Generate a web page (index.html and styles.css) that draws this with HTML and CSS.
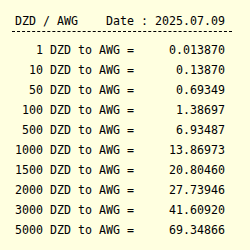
FILE: index.html
```html
<!DOCTYPE html>
<html>
<head>
<meta charset="utf-8">
<link rel="stylesheet" href="styles.css">
</head>
<body>
<div class="box">
  <div class="head">
    <span>DZD / AWG</span>
    <span>Date : 2025.07.09</span>
  </div>
  <div class="rows">
    <div class="row"><span class="amt">1</span><span class="mid">DZD to AWG =</span><span class="val">0.013870</span></div>
    <div class="row"><span class="amt">10</span><span class="mid">DZD to AWG =</span><span class="val">0.13870</span></div>
    <div class="row"><span class="amt">50</span><span class="mid">DZD to AWG =</span><span class="val">0.69349</span></div>
    <div class="row"><span class="amt">100</span><span class="mid">DZD to AWG =</span><span class="val">1.38697</span></div>
    <div class="row"><span class="amt">500</span><span class="mid">DZD to AWG =</span><span class="val">6.93487</span></div>
    <div class="row"><span class="amt">1000</span><span class="mid">DZD to AWG =</span><span class="val">13.86973</span></div>
    <div class="row"><span class="amt">1500</span><span class="mid">DZD to AWG =</span><span class="val">20.80460</span></div>
    <div class="row"><span class="amt">2000</span><span class="mid">DZD to AWG =</span><span class="val">27.73946</span></div>
    <div class="row"><span class="amt">3000</span><span class="mid">DZD to AWG =</span><span class="val">41.60920</span></div>
    <div class="row"><span class="amt">5000</span><span class="mid">DZD to AWG =</span><span class="val">69.34866</span></div>
  </div>
</div>
</body>
</html>
```

FILE: styles.css
```css
html, body {
  margin: 0;
  padding: 0;
  background: #ffffe0;
}
body {
  font-family: "DejaVu Sans Mono", monospace;
  font-size: 11.63px;
  color: #000;
}
.box {
  margin-left: 12px;
  width: 220px;
  padding-top: 14px;
}
.head {
  display: flex;
  justify-content: space-between;
  line-height: 14px;
  padding: 0 7px 3px 3px;
  border-bottom: 1px dashed #000;
}
.rows {
  padding-top: 8px;
}
.row {
  display: grid;
  grid-template-columns: 31px 91px 91px;
  line-height: 20px;
  white-space: pre;
}
.amt {
  text-align: right;
}
.mid {
  padding-left: 7px;
}
.val {
  text-align: right;
}
```
